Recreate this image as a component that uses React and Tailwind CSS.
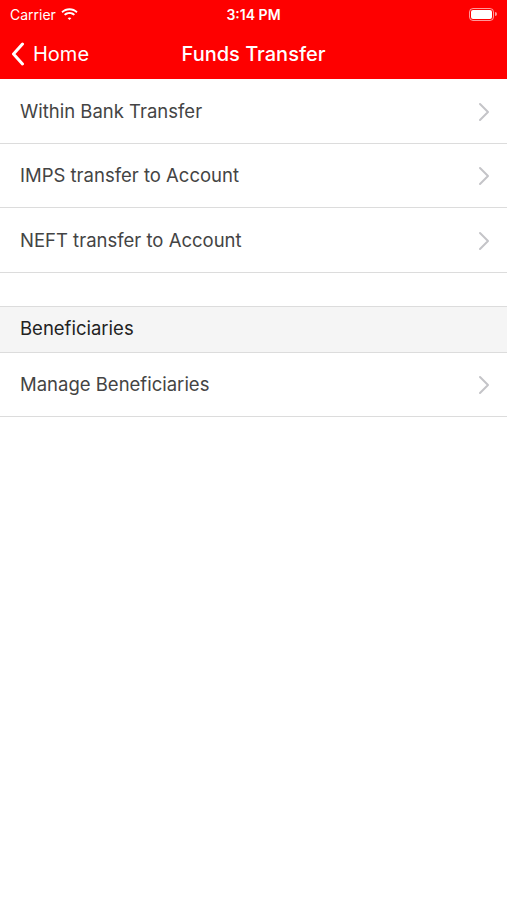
const ROWS = ['Within Bank Transfer', 'IMPS transfer to Account', 'NEFT transfer to Account'];

function Chevron() {
  return (
    <svg width="12" height="20" viewBox="0 0 12 20" fill="none" className="shrink-0">
      <path d="M2 2l8 8-8 8" stroke="#c4c4c8" strokeWidth="2" strokeLinecap="round" strokeLinejoin="round" />
    </svg>
  );
}

function Row({ label }) {
  return (
    <div className="flex h-[64.5px] items-center justify-between border-b border-[#dcdcdc] pt-[2px] pl-5 pr-[17px]">
      <span className="text-[18.5px] text-[#444]">{label}</span>
      <Chevron />
    </div>
  );
}

export default function App() {
  return (
    <main className="min-h-[900px] bg-white" style={{ fontFamily: 'Inter, "Noto Sans", Arial, sans-serif' }}>
      <header className="bg-[#fe0000] text-white">
        <div className="relative flex h-[28px] items-center justify-between px-[10px]">
          <div className="flex items-center gap-[5px] text-[14px]">
            <span>Carrier</span>
            <svg width="17" height="13" viewBox="0 0 17 13" fill="white">
              <path d="M8.5 2.2c2.6 0 5 1 6.8 2.7l1.3-1.4C14.4 1.4 11.6.2 8.5.2S2.6 1.4.4 3.5l1.3 1.4C3.5 3.2 5.9 2.2 8.5 2.2z" />
              <path d="M8.5 5.9c1.6 0 3.1.6 4.2 1.7l1.3-1.4C12.6 4.8 10.6 4 8.5 4S4.4 4.8 3 6.2l1.3 1.4c1.1-1.1 2.6-1.7 4.2-1.7z" />
              <path d="M8.5 9.5c.7 0 1.3.3 1.8.7L8.5 12.1 6.7 10.2c.5-.4 1.1-.7 1.8-.7z" />
            </svg>
          </div>
          <span className="absolute left-1/2 -translate-x-1/2 text-[14px] font-semibold">3:14 PM</span>
          <div className="flex items-center gap-[1px]">
            <div className="flex h-[13px] w-[25px] items-center rounded-[4px] border border-white/60 p-[1px]">
              <div className="h-full w-full rounded-[2px] bg-white" />
            </div>
            <div className="h-[4px] w-[2px] rounded-r-sm bg-white/60" />
          </div>
        </div>
        <div className="relative flex h-[51px] items-center px-[11px]">
          <div className="flex items-center gap-[8px]">
            <svg width="14" height="24" viewBox="0 0 14 24" fill="none">
              <path d="M11.5 2L2.5 12l9 10" stroke="white" strokeWidth="3" strokeLinecap="round" strokeLinejoin="round" />
            </svg>
            <span className="text-[20px]">Home</span>
          </div>
          <h1 className="absolute left-1/2 -translate-x-1/2 text-[20px] font-medium">Funds Transfer</h1>
        </div>
      </header>

      <section>
        {ROWS.map((r) => (
          <Row key={r} label={r} />
        ))}
      </section>

      <div className="h-[33px]" />

      <div className="flex h-[47px] items-center border-y border-[#dcdcdc] bg-[#f5f5f5] px-5">
        <span className="text-[18.5px] text-[#222]">Beneficiaries</span>
      </div>
      <Row label="Manage Beneficiaries" />
    </main>
  );
}
